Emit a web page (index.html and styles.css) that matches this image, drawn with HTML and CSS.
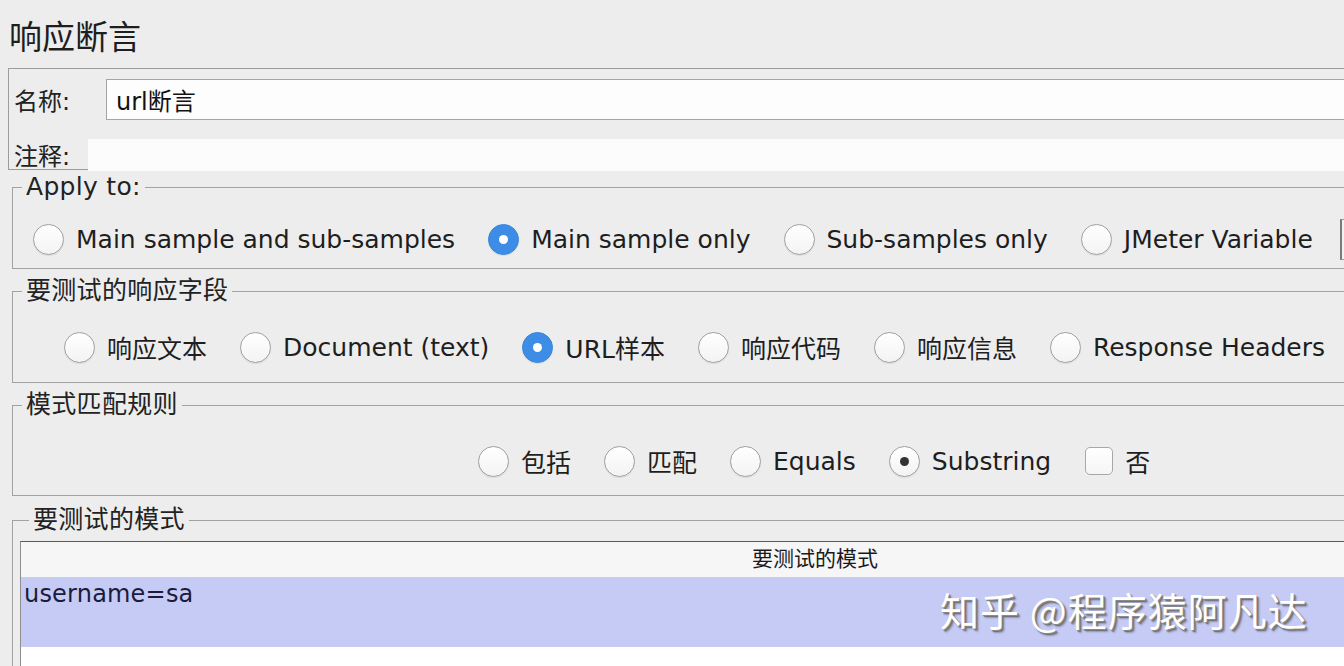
FILE: index.html
```html
<!DOCTYPE html>
<html lang="zh-CN">
<head>
  <meta charset="UTF-8" />
  <meta name="viewport" content="width=device-width, initial-scale=1.0" />
  <title>响应断言</title>
  <link rel="stylesheet" href="styles.css">
</head>
<body>

  <div class="panel">
    <h1 class="title">响应断言</h1>

    <!-- name / comment -->
    <div class="meta">
      <div class="meta-row name-row">
        <label class="meta-label name-label">名称:</label>
        <input class="name-input" type="text" value="url断言" />
      </div>
      <div class="meta-row comment-row">
        <label class="meta-label comment-label">注释:</label>
        <div class="comment-field"></div>
      </div>
    </div>

    <!-- Apply to -->
    <fieldset class="group apply-group">
      <legend>Apply to:</legend>
      <div class="options">
        <span class="opt"><span class="radio"></span>Main sample and sub-samples</span>
        <span class="opt"><span class="radio on"></span>Main sample only</span>
        <span class="opt"><span class="radio"></span>Sub-samples only</span>
        <span class="opt"><span class="radio"></span>JMeter Variable</span>
        <input class="var-input" type="text" />
      </div>
    </fieldset>

    <!-- response field -->
    <fieldset class="group field-group">
      <legend>要测试的响应字段</legend>
      <div class="options">
        <span class="opt"><span class="radio"></span>响应文本</span>
        <span class="opt"><span class="radio"></span>Document (text)</span>
        <span class="opt"><span class="radio on"></span>URL样本</span>
        <span class="opt"><span class="radio"></span>响应代码</span>
        <span class="opt"><span class="radio"></span>响应信息</span>
        <span class="opt"><span class="radio"></span>Response Headers</span>
      </div>
    </fieldset>

    <!-- match rules -->
    <fieldset class="group rule-group">
      <legend>模式匹配规则</legend>
      <div class="options">
        <span class="opt"><span class="radio"></span>包括</span>
        <span class="opt"><span class="radio"></span>匹配</span>
        <span class="opt"><span class="radio"></span>Equals</span>
        <span class="opt"><span class="radio dot"></span>Substring</span>
        <span class="opt"><span class="checkbox"></span>否</span>
      </div>
    </fieldset>

    <!-- patterns -->
    <fieldset class="group pattern-group">
      <legend>要测试的模式</legend>
      <div class="pattern-table">
        <div class="table-head">要测试的模式</div>
        <div class="table-row selected">username=sa</div>
      </div>
    </fieldset>
  </div>

  <div class="watermark">知乎 @程序猿阿凡达</div>

</body>
</html>
```

FILE: styles.css
```css
body {
  margin: 0;
  padding: 0;
  background-color: #ededed;
  font-family: "DejaVu Sans", "Noto Sans CJK SC", sans-serif;
  color: #1c1c1c;
  width: 1344px;
  height: 666px;
  overflow: hidden;
  position: relative;
}

.panel {
  width: 1610px;
}

.title {
  margin: 0;
  padding: 20px 0 0 9px;
  font-size: 33px;
  line-height: 36px;
  font-weight: normal;
  color: #1e1e1e;
}

/* name + comment box */
.meta {
  margin: 12px 0 0 8px;
  border: 1px solid #9c9c9c;
  padding: 10px 0 0 5px;
  height: 90px;
}

.meta-row {
  display: flex;
  align-items: center;
}

.meta-label {
  font-size: 24px;
  color: #222;
}

.name-label {
  width: 92px;
}

.comment-label {
  width: 74px;
}

.name-input {
  flex: 1;
  height: 41px;
  box-sizing: border-box;
  border: 1px solid #a4a4a4;
  background: #fdfdfd;
  font-family: inherit;
  font-size: 24px;
  padding: 0 9px;
  color: #111;
  outline: none;
}

.comment-row {
  margin-top: 17px;
}

.comment-field {
  flex: 1;
  height: 32px;
  background: #fcfcfc;
}

/* titled groups */
.group {
  margin: 9px 0 0 12px;
  border: 1px solid #a2a2a2;
  padding: 28px 0 20px 0;
  min-width: 0;
}

.group legend {
  font-size: 25px;
  line-height: 26px;
  letter-spacing: 0.3px;
  padding: 0 4px;
  margin-left: 9px;
  color: #222;
}

.apply-group {
  margin-top: 4px;
  padding: 24px 0 14px 0;
}

.apply-group .options {
  padding-left: 20px;
}

.field-group .options {
  padding-left: 51px;
}

.rule-group {
  padding-bottom: 19px;
}

.rule-group .options {
  padding-left: 465px;
}

.pattern-group {
  margin-top: 11px;
  padding: 8px 0 0 7px;
}

.options {
  display: flex;
  align-items: center;
  gap: 33px;
  height: 30px;
}

.opt {
  display: flex;
  align-items: center;
  gap: 12px;
  font-size: 25px;
  white-space: nowrap;
  color: #1e1e1e;
}

.radio {
  width: 31px;
  height: 31px;
  box-sizing: border-box;
  border-radius: 50%;
  border: 1px solid #a0a0a0;
  background: linear-gradient(#ffffff, #f3f3f3);
  box-shadow: 0 1px 1px rgba(0,0,0,0.08);
  position: relative;
  flex-shrink: 0;
}

.radio.on {
  background: #3d8de6;
  border-color: #3a86dc;
}

.radio.on::after {
  content: "";
  position: absolute;
  left: 10px;
  top: 10px;
  width: 9px;
  height: 9px;
  border-radius: 50%;
  background: #ffffff;
}

.radio.dot::after {
  content: "";
  position: absolute;
  left: 10px;
  top: 10px;
  width: 9px;
  height: 9px;
  border-radius: 50%;
  background: #333;
}

.checkbox {
  width: 28px;
  height: 28px;
  box-sizing: border-box;
  border-radius: 5px;
  border: 1px solid #a8a8a8;
  background: linear-gradient(#ffffff, #f5f5f5);
  flex-shrink: 0;
  margin-left: 1px;
}

.var-input {
  margin-left: -6px;
  height: 41px;
  width: 200px;
  flex-shrink: 0;
  box-sizing: border-box;
  border: 1px solid #9a9a9a;
  border-left: 2px solid #7a7a7a;
  background: #f2f2f2;
}

/* pattern table */
.pattern-table {
  border-top: 1px solid #5a5a5a;
  border-left: 1px solid #8e8e8e;
  background: #ffffff;
  height: 140px;
}

.table-head {
  height: 35px;
  line-height: 35px;
  text-align: center;
  font-size: 21px;
  background: #f6f6f6;
  color: #1a1a1a;
}

.table-row {
  height: 70px;
  box-sizing: border-box;
  padding: 3px 0 0 3px;
  font-size: 24px;
  line-height: 28px;
  letter-spacing: 0.2px;
}

.table-row.selected {
  background: #c6cbf6;
  color: #1b1b3c;
}

/* watermark over the picture */
.watermark {
  position: absolute;
  left: 940px;
  top: 584px;
  font-family: "Noto Sans CJK SC", sans-serif;
  font-size: 39px;
  line-height: 50px;
  color: #ffffff;
  letter-spacing: 1px;
  text-shadow: 1px 1px 0 #8a8a8a, 2px 2px 1px #6f6f6f, 3px 3px 2px rgba(0,0,0,0.25);
}
```
